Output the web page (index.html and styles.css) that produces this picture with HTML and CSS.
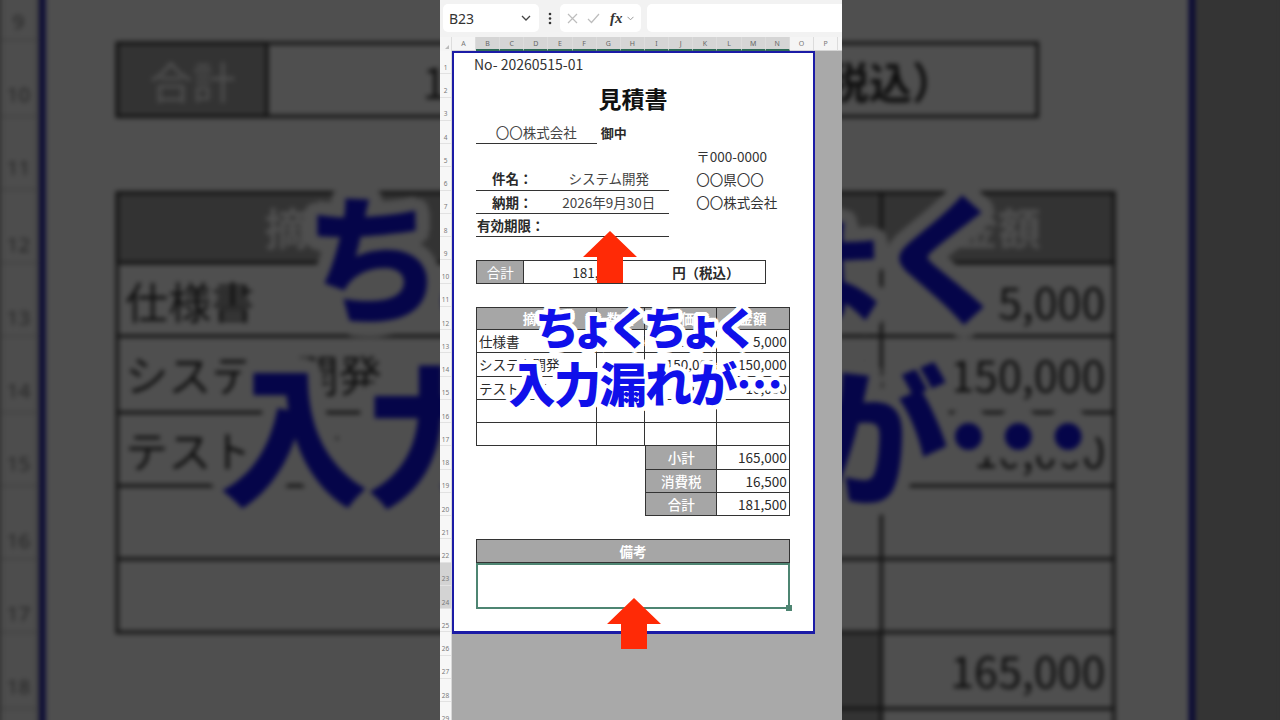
FILE: index.html
```html
<!DOCTYPE html>
<html lang="ja">
<head>
<meta charset="utf-8">
<title>見積書</title>
<link rel="stylesheet" href="styles.css">
</head>
<body>
<div class="stage">
  <div class="frame">
    <div class="toolbar">
      <div class="namebox">
        <span>B23</span>
        <svg class="chev" width="10" height="6" viewBox="0 0 10 6"><polyline points="1,1 5,5 9,1" fill="none" stroke="#444" stroke-width="1.3"/></svg>
      </div>
      <div class="kebab">
        <svg width="4" height="13" viewBox="0 0 4 13"><circle cx="2" cy="2" r="1.3" fill="#333"/><circle cx="2" cy="6.5" r="1.3" fill="#333"/><circle cx="2" cy="11" r="1.3" fill="#333"/></svg>
      </div>
      <div class="fxbox">
        <svg width="11" height="11" viewBox="0 0 11 11"><path d="M1 1 L10 10 M10 1 L1 10" stroke="#bdbdbd" stroke-width="1.2" fill="none"/></svg>
        <svg width="13" height="11" viewBox="0 0 13 11"><polyline points="1,6 4.5,9.5 12,1" fill="none" stroke="#bdbdbd" stroke-width="1.2"/></svg>
        <span class="fx">fx</span>
        <svg width="7" height="5" viewBox="0 0 7 5"><polyline points="0.5,0.8 3.5,3.8 6.5,0.8" fill="none" stroke="#999" stroke-width="1"/></svg>
      </div>
      <div class="formula"></div>
    </div>

    <div class="colhead">
      <div class="corner"></div>
      <div class="ch first">A</div>
      <div class="ch sel">B</div>
      <div class="ch sel">C</div>
      <div class="ch sel">D</div>
      <div class="ch sel">E</div>
      <div class="ch sel">F</div>
      <div class="ch sel">G</div>
      <div class="ch sel">H</div>
      <div class="ch sel">I</div>
      <div class="ch sel">J</div>
      <div class="ch sel">K</div>
      <div class="ch sel">L</div>
      <div class="ch sel">M</div>
      <div class="ch sel">N</div>
      <div class="ch">O</div>
      <div class="ch">P</div>
      <div class="ch">Q</div>
    </div>

    <div class="sheet">
      <div class="rowhead">
        <div class="rh">1</div><div class="rh">2</div><div class="rh">3</div><div class="rh">4</div>
        <div class="rh">5</div><div class="rh">6</div><div class="rh">7</div><div class="rh">8</div>
        <div class="rh">9</div><div class="rh">10</div><div class="rh">11</div><div class="rh">12</div>
        <div class="rh">13</div><div class="rh">14</div><div class="rh">15</div><div class="rh">16</div>
        <div class="rh">17</div><div class="rh">18</div><div class="rh">19</div><div class="rh">20</div>
        <div class="rh">21</div><div class="rh">22</div><div class="rh sel">23</div><div class="rh sel">24</div>
        <div class="rh">25</div><div class="rh">26</div><div class="rh">27</div><div class="rh">28</div>
        <div class="rh">29</div>
      </div>
      <div class="canvas">
        <div class="page">
          <div class="c no">No- 20260515-01</div>
          <div class="c title">見積書</div>
          <div class="c client ul">〇〇株式会社</div>
          <div class="c onchu">御中</div>
          <div class="c zip">〒000-0000</div>

          <div class="c k1 ul">件名：</div>
          <div class="c v1 ul">システム開発</div>
          <div class="c addr1">〇〇県〇〇</div>

          <div class="c k2 ul">納期：</div>
          <div class="c v2 ul">2026年9月30日</div>
          <div class="c addr2">〇〇株式会社</div>

          <div class="c k3 ul">有効期限：</div>
          <div class="c v3 ul"></div>

          <div class="c sumlbl">合計</div>
          <div class="c sumval">181,500</div>
          <div class="c sumunit">円（税込）</div>

          <div class="c cell first top hd ca r12">摘要</div>
          <div class="c cell top hd cb r12">数量</div>
          <div class="c cell top hd cc r12">単価</div>
          <div class="c cell top hd cd r12">金額</div>

          <div class="c cell first txt ca r13">仕様書</div>
          <div class="c cell num cb r13">1</div>
          <div class="c cell num cc r13">5,000</div>
          <div class="c cell num cd r13">5,000</div>

          <div class="c cell first txt ca r14">システム開発</div>
          <div class="c cell num cb r14">1</div>
          <div class="c cell num cc r14">150,000</div>
          <div class="c cell num cd r14">150,000</div>

          <div class="c cell first txt ca r15">テスト実施</div>
          <div class="c cell num cb r15">1</div>
          <div class="c cell num cc r15">10,000</div>
          <div class="c cell num cd r15">10,000</div>

          <div class="c cell first ca r16"></div>
          <div class="c cell cb r16"></div>
          <div class="c cell cc r16"></div>
          <div class="c cell cd r16"></div>

          <div class="c cell first ca r17"></div>
          <div class="c cell cb r17"></div>
          <div class="c cell cc r17"></div>
          <div class="c cell cd r17"></div>

          <div class="c cell first hd lite cc r18">小計</div>
          <div class="c cell num cd r18">165,000</div>
          <div class="c cell first hd lite cc r19">消費税</div>
          <div class="c cell num cd r19">16,500</div>
          <div class="c cell first hd lite cc r20">合計</div>
          <div class="c cell num cd r20">181,500</div>

          <div class="c notehead hd">備考</div>
          <div class="c notebody"></div>
        </div>
      </div>
    </div>

    <svg class="arrow arrow-top" width="54" height="52" viewBox="0 0 54 52"><path d="M27 0 L54 26 L40 26 L40 52 L14 52 L14 26 L0 26 Z" fill="#ff2a06"/></svg>
    <svg class="arrow arrow-bottom" width="54" height="51" viewBox="0 0 54 51"><path d="M27 0 L54 26 L40 26 L40 51 L14 51 L14 26 L0 26 Z" fill="#ff2a06"/></svg>

    <div class="caption">
      <div class="cap1">ちょくちょく</div>
      <div class="cap2">入力漏れが…</div>
    </div>
  </div>
</div>
<script src="script.js"></script>
</body>
</html>
```

FILE: styles.css
```css
* { box-sizing: border-box; margin: 0; padding: 0; }

html, body {
  width: 1280px;
  height: 720px;
  overflow: hidden;
  background: #333;
}

body {
  font-family: "Noto Sans CJK JP", "Noto Sans", sans-serif;
}

.stage {
  display: grid;
  width: 1280px;
  height: 720px;
  place-items: center;
  overflow: hidden;
}

.frame {
  grid-area: 1 / 1;
  width: 402px;
  height: 720px;
  margin-left: 2px;
  position: relative;
  overflow: hidden;
  background: #a9a9a9;
  display: flex;
  flex-direction: column;
}

.frame.backdrop {
  transform: scale(3.184);
  filter: brightness(0.31) blur(0.9px);
}

/* ---------- toolbar ---------- */
.toolbar {
  height: 37px;
  flex: none;
  background: #f2f2f2;
  display: flex;
  align-items: center;
  padding: 0 0 1px 3px;
}

.namebox {
  width: 96px;
  height: 28px;
  background: #fff;
  border-radius: 5px;
  display: flex;
  align-items: center;
  justify-content: space-between;
  padding: 0 8px 0 6px;
  font-family: "Noto Sans", sans-serif;
  font-size: 14px;
  color: #333;
}

.kebab {
  width: 21px;
  display: flex;
  justify-content: center;
  align-items: center;
}

.fxbox {
  width: 81px;
  height: 28px;
  background: #fff;
  border-radius: 5px;
  display: flex;
  align-items: center;
  gap: 9px;
  padding-left: 7px;
}

.fx {
  font-family: "Liberation Serif", serif;
  font-style: italic;
  font-weight: 700;
  font-size: 15px;
  color: #333;
  margin-left: 1px;
  margin-right: -5px;
}

.formula {
  flex: 1;
  height: 28px;
  margin-left: 6px;
  background: #fff;
  border-radius: 5px 0 0 5px;
}

/* ---------- column header ---------- */
.colhead {
  height: 14px;
  flex: none;
  display: flex;
  background: #f5f5f5;
}

.corner {
  width: 12px;
  flex: none;
  position: relative;
  border-right: 1px solid #ddd;
}

.corner::after {
  content: "";
  position: absolute;
  right: 2px;
  bottom: 2px;
  border-left: 4px solid transparent;
  border-bottom: 4px solid #bbb;
}

.ch {
  width: 24.15px;
  flex: none;
  font-family: "Noto Sans", sans-serif;
  font-size: 7px;
  color: #777;
  text-align: center;
  line-height: 13px;
  border-right: 1px solid #dcdcdc;
  border-bottom: 1px solid #d4d4d4;
}

.ch.first { width: 24px; }

.ch.sel {
  background: #d5d5d5;
  border-bottom: 2px solid #2f6c57;
  color: #666;
}

/* ---------- sheet ---------- */
.sheet {
  flex: 1;
  display: flex;
  min-height: 0;
}

.rowhead {
  width: 12px;
  flex: none;
  background: #f7f7f7;
  border-right: 1px solid #d8d8d8;
  overflow: hidden;
}

.rh {
  height: 23.25px;
  font-family: "Noto Sans", sans-serif;
  font-size: 6.5px;
  line-height: 1;
  color: #777;
  display: flex;
  align-items: flex-end;
  justify-content: center;
  padding-bottom: 2px;
  border-bottom: 1px solid #e2e2e2;
}

.rh.sel { background: #d3d3d3; }

.canvas {
  flex: 1;
  background: #a9a9a9;
  overflow: hidden;
}

.page {
  width: 363px;
  height: 583px;
  background: #fff;
  border: 2px solid #1b1ba6;
  border-bottom-width: 3px;
  display: grid;
  grid-template-columns: 22px repeat(13, 24.15px) 1fr;
  grid-template-rows: 21.25px repeat(24, 23.25px);
  font-size: 13.5px;
  color: #2a2a2a;
}

.c {
  display: flex;
  align-items: center;
  white-space: nowrap;
  min-width: 0;
}

.ul { border-bottom: 1px solid #333; }

.no {
  grid-area: 1 / 2 / 2 / 10;
  margin-left: -2px;
  font-size: 14px;
  color: #333;
  padding-top: 1px;
}

.title {
  grid-area: 2 / 2 / 4 / 15;
  justify-content: center;
  font-size: 23px;
  font-weight: 700;
  color: #111;
}

.client {
  grid-area: 4 / 2 / 5 / 7;
  justify-content: center;
  color: #444;
}

.onchu {
  grid-area: 4 / 7 / 5 / 9;
  padding-left: 4px;
  font-weight: 700;
  font-size: 13px;
}

.zip { grid-area: 5 / 11 / 6 / 15; padding-left: 3px; color: #333; }
.addr1 { grid-area: 6 / 11 / 7 / 15; padding-left: 3px; color: #333; }
.addr2 { grid-area: 7 / 11 / 8 / 15; padding-left: 3px; color: #333; }

.k1, .k2 { justify-content: center; font-weight: 700; }
.k1 { grid-area: 6 / 2 / 7 / 5; }
.k2 { grid-area: 7 / 2 / 8 / 5; }
.k3 { grid-area: 8 / 2 / 9 / 5; font-weight: 700; padding-left: 1px; }

.v1, .v2 { justify-content: center; color: #444; }
.v1 { grid-area: 6 / 5 / 7 / 10; }
.v2 { grid-area: 7 / 5 / 8 / 10; }
.v3 { grid-area: 8 / 5 / 9 / 10; }

.sumlbl {
  grid-area: 10 / 2 / 11 / 4;
  justify-content: center;
  background: #a6a6a6;
  color: #fff;
  border: 1px solid #333;
}

.sumval {
  grid-area: 10 / 4 / 11 / 10;
  justify-content: center;
  border-top: 1px solid #333;
  border-bottom: 1px solid #333;
}

.sumunit {
  grid-area: 10 / 10 / 11 / 14;
  padding-left: 3px;
  font-weight: 700;
  border-top: 1px solid #333;
  border-bottom: 1px solid #333;
  border-right: 1px solid #333;
}

/* table */
.cell {
  border-right: 1px solid #333;
  border-bottom: 1px solid #333;
}

.cell.first { border-left: 1px solid #333; }
.cell.top { border-top: 1px solid #333; }

.hd {
  background: #a6a6a6;
  color: #fff;
  font-weight: 700;
  justify-content: center;
}

.hd.lite { font-weight: 500; }

.txt { padding-left: 2px; }
.num { justify-content: flex-end; padding-right: 2px; }

.ca { grid-column: 2 / 7; }
.cb { grid-column: 7 / 9; }
.cc { grid-column: 9 / 12; }
.cd { grid-column: 12 / 15; }

.r12 { grid-row: 12; }
.r13 { grid-row: 13; }
.r14 { grid-row: 14; }
.r15 { grid-row: 15; }
.r16 { grid-row: 16; }
.r17 { grid-row: 17; }
.r18 { grid-row: 18; }
.r19 { grid-row: 19; }
.r20 { grid-row: 20; }

.notehead {
  grid-area: 22 / 2 / 23 / 15;
  border: 1px solid #333;
}

.notebody {
  grid-area: 23 / 2 / 25 / 15;
  border: 2px solid #4e8572;
  position: relative;
}

.notebody::after {
  content: "";
  position: absolute;
  right: -4px;
  bottom: -4px;
  width: 6px;
  height: 6px;
  background: #4e8572;
}

/* ---------- overlays ---------- */
.arrow { position: absolute; }
.arrow-top { left: 143px; top: 231px; }
.arrow-bottom { left: 167px; top: 598px; }

.caption {
  position: absolute;
  left: 0;
  right: 0;
  top: 299px;
  text-align: center;
  font-family: "Noto Sans CJK JP", sans-serif;
  font-weight: 900;
  color: #1010ea;
  line-height: 55px;
  white-space: nowrap;
  text-shadow:
    0 4.5px 0 #fff, 0 -4.5px 0 #fff, 4.5px 0 0 #fff, -4.5px 0 0 #fff,
    3.2px 3.2px 0 #fff, -3.2px 3.2px 0 #fff, 3.2px -3.2px 0 #fff, -3.2px -3.2px 0 #fff,
    2px 4px 0 #fff, -2px 4px 0 #fff, 2px -4px 0 #fff, -2px -4px 0 #fff,
    4px 2px 0 #fff, -4px 2px 0 #fff, 4px -2px 0 #fff, -4px -2px 0 #fff,
    0 0 2px #fff;
}

.cap1 {
  font-size: 44px;
  letter-spacing: -8px;
  margin-left: 4px;
}

.cap2 {
  font-size: 47px;
  letter-spacing: -1.5px;
  margin-left: 8px;
}
```

FILE: script.js
```js
(function () {
  var frame = document.querySelector('.frame');
  var copy = frame.cloneNode(true);
  copy.classList.add('backdrop');
  copy.setAttribute('aria-hidden', 'true');
  frame.parentNode.insertBefore(copy, frame);
})();
```
